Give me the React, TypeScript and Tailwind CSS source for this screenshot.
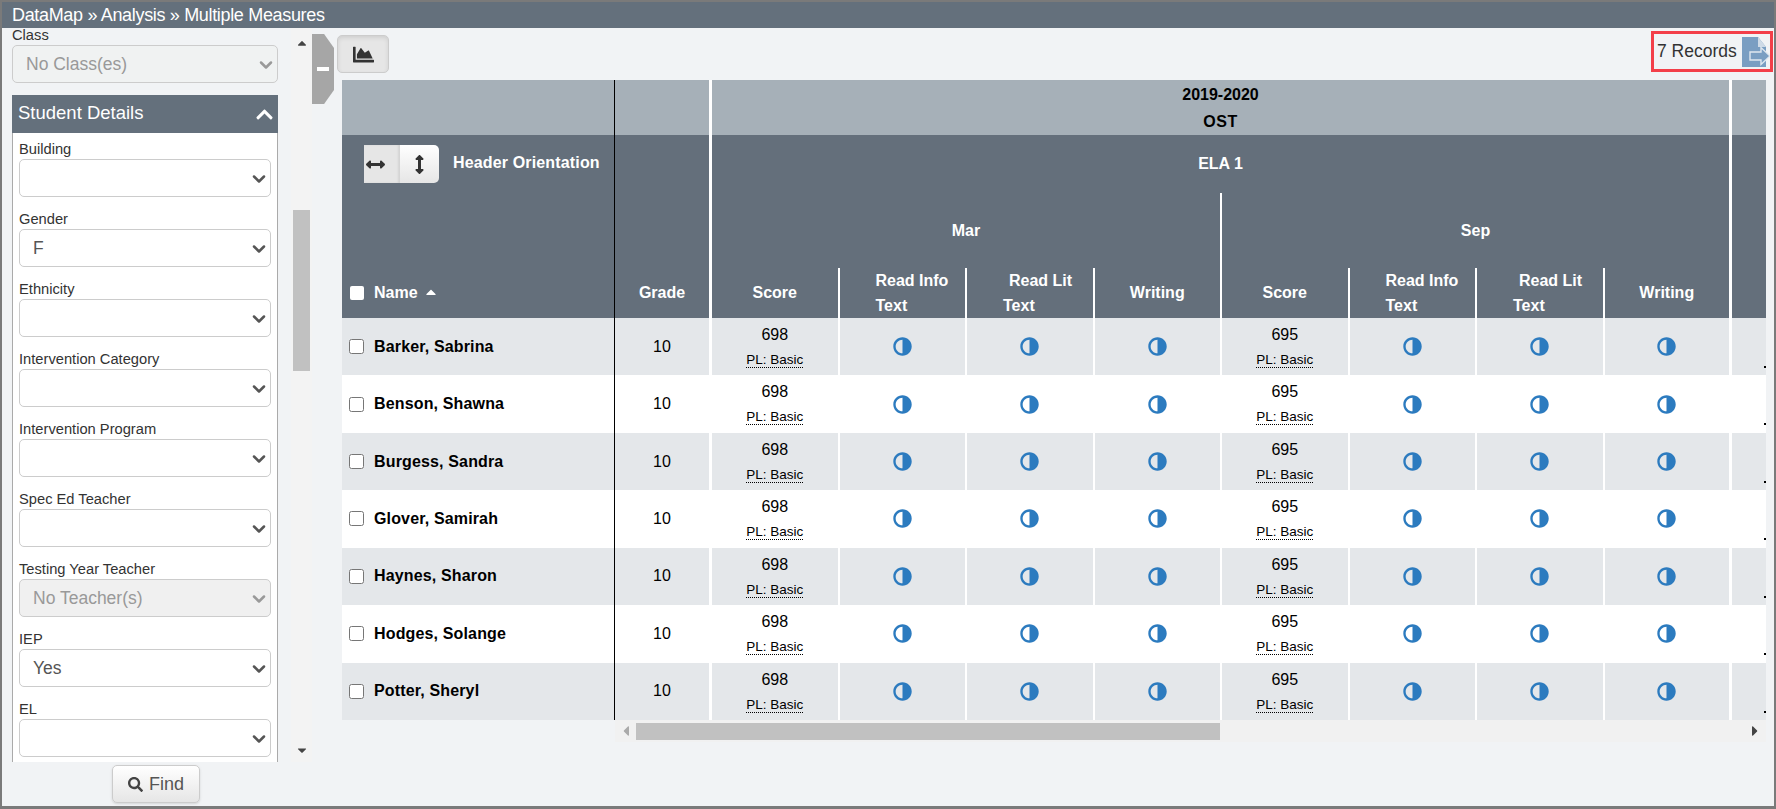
import { FaAdjust, FaArrowsAltH, FaArrowsAltV, FaCaretUp, FaChartArea, FaChevronUp, FaSearch } from 'react-icons/fa'
import { ChevronDown } from 'lucide-react'

const ROWS = [
  'Barker, Sabrina',
  'Benson, Shawna',
  'Burgess, Sandra',
  'Glover, Samirah',
  'Haynes, Sharon',
  'Hodges, Solange',
  'Potter, Sheryl',
]

const FIELDS: { label: string; value?: string; disabled?: boolean }[] = [
  { label: 'Building' },
  { label: 'Gender', value: 'F' },
  { label: 'Ethnicity' },
  { label: 'Intervention Category' },
  { label: 'Intervention Program' },
  { label: 'Spec Ed Teacher' },
  { label: 'Testing Year Teacher', value: 'No Teacher(s)', disabled: true },
  { label: 'IEP', value: 'Yes' },
  { label: 'EL' },
]

function Select({ value, disabled, width, muted }: { value?: string; disabled?: boolean; width: string; muted: string }) {
  return (
    <div className={`relative ${width}`}>
      <select
        disabled={disabled}
        defaultValue={value ?? ''}
        className={`block h-[38px] w-full appearance-none rounded-[5px] border border-[#ccc] pl-[13px] text-[17.5px] ${
          disabled ? `${muted} text-[#999] opacity-100` : 'bg-white text-[#555]'
        }`}
      >
        <option value={value ?? ''}>{value ?? ''}</option>
      </select>
      <ChevronDown
        size={20}
        strokeWidth={3}
        className={`pointer-events-none absolute right-[2px] top-[10px] ${disabled ? 'text-[#999]' : 'text-[#555]'}`}
      />
    </div>
  )
}

function Field({ label, value, disabled }: { label: string; value?: string; disabled?: boolean }) {
  return (
    <div className="mb-3 shrink-0">
      <div className="h-5 text-[14.7px] leading-5 text-[#333]">{label}</div>
      <Select value={value} disabled={disabled} width="w-[252px]" muted="bg-[#f0f0f0]" />
    </div>
  )
}

function Sidebar() {
  return (
    <aside className="flex w-[310px] shrink-0 flex-col">
      <div className="flex h-[734px] shrink-0">
        <div className="h-full w-[289px] overflow-hidden pl-[10px]">
          <div className="h-[17px] text-[14.7px] leading-[15px] text-[#333]">Class</div>
          <Select value="No Class(es)" disabled width="w-[266px]" muted="bg-[#f0f2f2]" />

          <section className="mt-3 w-[266px]">
            <div className="flex h-[38px] items-center justify-between bg-[#64707c] pb-[2px] pl-[6px] pr-[4px] text-[18.5px] text-white">
              <span>Student Details</span>
              <FaChevronUp className="mt-[2px] text-[19px]" />
            </div>
            <div className="flex h-[629px] flex-col overflow-hidden border-x border-[#aaa] bg-white pl-[6px] pt-[6px]">
              {FIELDS.map(f => (
                <Field key={f.label} {...f} />
              ))}
            </div>
          </section>
        </div>

        {/* Scrollbar */}
        <div className="flex h-full w-[21px] flex-col items-center bg-[#f3f3f3] pt-2">
          <FaCaretUp className="text-[14px] text-[#444]" />
          <div className="mt-[160px] h-[161px] w-[17px] bg-[#c1c1c1]" />
          <FaCaretUp className="mt-auto mb-[4px] rotate-180 text-[14px] text-[#444]" />
        </div>
      </div>

      <div className="pl-[110px] pt-[3px]">
        <button className="flex h-[38px] w-[88px] items-center justify-center gap-[6px] rounded-[5px] border border-[#ccc] bg-gradient-to-b from-white to-[#e6e6e6] text-[18px] text-[#555] shadow-sm">
          <FaSearch className="text-[15px] text-[#444]" />
          Find
        </button>
      </div>
    </aside>
  )
}

function HeaderLabel({ children }: { children: React.ReactNode }) {
  return <span className="text-[16px] font-bold text-white">{children}</span>
}

function SubHeaders({ last }: { last?: boolean }) {
  const cell = 'flex w-[127.5px] shrink-0 items-center justify-center border-r-2 border-white'
  return (
    <div className="flex h-[50px]">
      <div className={cell}>
        <HeaderLabel>Score</HeaderLabel>
      </div>
      <div className={`${cell} !justify-start pl-[36px] leading-[25px]`}>
        <div className="flex flex-col">
          <HeaderLabel>Read Info</HeaderLabel>
          <HeaderLabel>Text</HeaderLabel>
        </div>
      </div>
      <div className={`${cell} !justify-start pl-[36px] leading-[25px]`}>
        <div className="flex flex-col">
          <span className="pl-[6px]">
            <HeaderLabel>Read Lit</HeaderLabel>
          </span>
          <HeaderLabel>Text</HeaderLabel>
        </div>
      </div>
      <div className={`flex items-center justify-center ${last ? 'w-[124.5px]' : 'w-[125.5px]'}`}>
        <HeaderLabel>Writing</HeaderLabel>
      </div>
    </div>
  )
}

function TableHeader() {
  return (
    <div className="flex h-[238px] shrink-0">
      <div className="flex w-[273px] shrink-0 flex-col border-r border-black">
        <div className="h-[55px] bg-[#a6b0b8]" />
        <div className="flex flex-1 flex-col bg-[#646f7b]">
          <div className="flex items-center pl-[22px] pt-[10px]">
            <div className="flex h-[38px] w-[75px] overflow-hidden rounded-r-[5px]">
              <button className="flex w-[36px] items-center justify-start bg-[#e6e6e6] pl-[2px] text-[#333] shadow-[inset_-2px_0_2px_rgba(0,0,0,0.08)]">
                <FaArrowsAltH className="text-[19px]" />
              </button>
              <button className="flex flex-1 items-center justify-center bg-gradient-to-b from-white to-[#e6e6e6] text-[#333]">
                <FaArrowsAltV className="text-[19px]" />
              </button>
            </div>
            <span className="ml-[14px] mt-[-3px] whitespace-nowrap text-[16px] font-bold tracking-[0.15px] text-white">
              Header Orientation
            </span>
          </div>
          <div className="mt-auto flex h-[50px] items-center pl-[8px]">
            <input type="checkbox" className="h-[14px] w-[14px] appearance-none rounded-[2px] bg-white" />
            <span className="ml-[10px] text-[16px] font-bold text-white">Name</span>
            <FaCaretUp className="ml-[5px] mb-[2px] text-[16px] text-white" />
          </div>
        </div>
      </div>

      <div className="flex w-[97px] shrink-0 flex-col border-r-[3px] border-white">
        <div className="h-[55px] bg-[#a6b0b8]" />
        <div className="flex flex-1 items-end justify-center bg-[#646f7b]">
          <div className="flex h-[50px] items-center">
            <HeaderLabel>Grade</HeaderLabel>
          </div>
        </div>
      </div>

      <div className="flex w-[1020px] shrink-0 flex-col border-r-[3px] border-white">
        <div className="flex h-[55px] flex-col items-center justify-center bg-[#a6b0b8] text-[16px] font-bold leading-[27px] text-black">
          <span>2019-2020</span>
          <span className="tracking-[0.5px]">OST</span>
        </div>
        <div className="flex flex-1 flex-col bg-[#646f7b]">
          <div className="flex h-[58px] items-center justify-center">
            <HeaderLabel>ELA 1</HeaderLabel>
          </div>
          <div className="flex flex-1">
            <div className="flex w-[510px] shrink-0 flex-col border-r-2 border-white">
              <div className="flex h-[75px] items-center justify-center">
                <HeaderLabel>Mar</HeaderLabel>
              </div>
              <SubHeaders />
            </div>
            <div className="flex w-[507px] shrink-0 flex-col">
              <div className="flex h-[75px] items-center justify-center">
                <HeaderLabel>Sep</HeaderLabel>
              </div>
              <SubHeaders last />
            </div>
          </div>
        </div>
      </div>

      <div className="flex w-[34px] shrink-0 flex-col">
        <div className="h-[55px] bg-[#a6b0b8]" />
        <div className="flex-1 bg-[#646f7b]" />
      </div>
    </div>
  )
}

function ScoreCell({ score, width }: { score: number; width: string }) {
  return (
    <div className={`flex shrink-0 flex-col items-center border-white pt-1 text-black ${width}`}>
      <span className="h-[26px] text-[16px] leading-[26px]">{score}</span>
      <span className="mt-[4px] border-b border-dotted border-black text-[13.5px] leading-[15px]">PL: Basic</span>
    </div>
  )
}

function IconCell({ width }: { width: string }) {
  return (
    <div className={`flex shrink-0 items-center justify-center border-white ${width}`}>
      <FaAdjust className="-scale-x-100 text-[19px] text-[#2c7bbf]" />
    </div>
  )
}

function TableRow({ name, striped }: { name: string; striped: boolean }) {
  return (
    <div className={`flex min-h-0 flex-1 ${striped ? 'bg-[#e4e7ea]' : 'bg-white'}`}>
      <div className="flex w-[273px] shrink-0 items-center border-r border-black pl-[7px] text-black">
        <input type="checkbox" className="m-0 h-[15px] w-[15px]" />
        <span className="ml-[10px] text-[16px] font-bold tracking-[0.15px]">{name}</span>
      </div>
      <div className="flex w-[97px] shrink-0 items-center justify-center border-r-[3px] border-white text-[16px] text-black">
        10
      </div>
      <ScoreCell score={698} width="w-[127.5px] border-r-2" />
      <IconCell width="w-[127.5px] border-r-2" />
      <IconCell width="w-[127.5px] border-r-2" />
      <IconCell width="w-[127.5px] border-r-2" />
      <ScoreCell score={695} width="w-[127.5px] border-r-2" />
      <IconCell width="w-[127.5px] border-r-2" />
      <IconCell width="w-[127.5px] border-r-2" />
      <IconCell width="w-[127.5px] border-r-[3px]" />
      {/* next column is scrolled away, only the start of its dotted underline shows */}
      <div className="flex w-[34px] shrink-0 justify-end pt-[48px]">
        <span className="h-[2px] w-[2px] bg-black" />
      </div>
    </div>
  )
}

function RecordsBadge() {
  return (
    <div className="flex h-[41px] w-[122px] items-center overflow-hidden border-[3px] border-[#f33f49] pl-[3px]">
      <span className="whitespace-nowrap text-[17.5px] text-[#333]">7 Records</span>
      <svg viewBox="0 0 28 30" className="ml-[5px] h-[30px] w-[28px] shrink-0">
        <path d="M0 0H16L24 10V30H0Z" fill="#7a9ec2" />
        <path d="M16 0L24 10H16Z" fill="#cfdbe7" />
        <path d="M8 15H19V10.5L28 19L19 27.5V23H8Z" fill="#7a9ec2" stroke="#dfe7ef" strokeWidth="1.4" />
      </svg>
    </div>
  )
}

export default function App() {
  return (
    <div className="flex h-[809px] w-full flex-col border-x-2 border-b-[3px] border-t-2 border-[#7a7a7a] bg-[#f1f3f5] font-['Liberation_Sans',Arial,sans-serif]">
      <header className="flex h-[26px] shrink-0 items-center bg-[#64707c] pl-[10px] text-[18px] tracking-[-0.33px] text-white">
        DataMap » Analysis » Multiple Measures
      </header>

      <main className="flex min-h-0 flex-1 overflow-hidden">
        <Sidebar />

        <div className="mt-[6px] flex h-[70px] w-[22px] shrink-0 items-center justify-center bg-[#a6a6a6] [clip-path:polygon(0_0,55%_0,100%_20%,100%_80%,55%_100%,0_100%)]">
          <div className="h-1 w-[12px] bg-white" />
        </div>

        <div className="flex min-w-0 flex-1 flex-col">
          <div className="flex h-[52px] shrink-0 items-start justify-between pl-[3px] pr-[1px]">
            <button className="mt-[7px] flex h-[38px] w-[52px] items-center justify-center rounded-[5px] border border-[#ccc] bg-[#e6e6e6] text-[#333] shadow-[inset_0_2px_4px_rgba(0,0,0,0.1)]">
              <FaChartArea className="text-[21px]" />
            </button>
            <div className="mt-[3px]">
              <RecordsBadge />
            </div>
          </div>

          <div className="ml-2 flex h-[640px] w-[1424px] shrink-0 flex-col overflow-hidden">
            <TableHeader />
            <div className="flex h-[402px] shrink-0 flex-col">
              {ROWS.map((name, i) => (
                <TableRow key={name} name={name} striped={i % 2 === 0} />
              ))}
            </div>
          </div>

          {/* Horizontal scrollbar */}
          <div className="ml-[281px] flex h-[22px] w-[1151px] shrink-0 items-center bg-[#f1f1f1]">
            <FaCaretUp className="ml-[3px] -rotate-90 text-[16px] text-[#aaa]" />
            <div className="ml-[2px] h-[17px] w-[584px] bg-[#c1c1c1]" />
            <FaCaretUp className="ml-auto mr-[3px] rotate-90 text-[16px] text-[#444]" />
          </div>
        </div>
      </main>
    </div>
  )
}
